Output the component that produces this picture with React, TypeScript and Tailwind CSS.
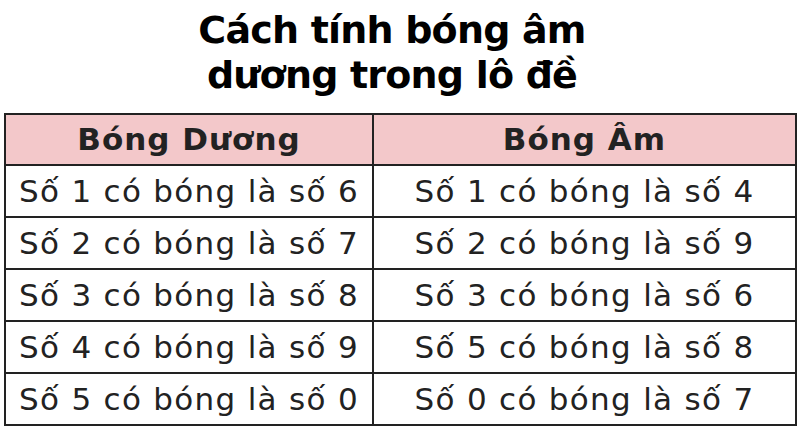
import React from 'react';

const ROWS: [string, string][] = [
  ['Số 1 có bóng là số 6', 'Số 1 có bóng là số 4'],
  ['Số 2 có bóng là số 7', 'Số 2 có bóng là số 9'],
  ['Số 3 có bóng là số 8', 'Số 3 có bóng là số 6'],
  ['Số 4 có bóng là số 9', 'Số 5 có bóng là số 8'],
  ['Số 5 có bóng là số 0', 'Số 0 có bóng là số 7'],
];

export default function App() {
  return (
    <div className="w-[800px] h-[431px] bg-white overflow-hidden font-['DejaVu_Sans',sans-serif]">
      {/* Title */}
      <h1 className="pt-[8px] pr-[16px] text-center font-bold text-[38px] leading-[45px] tracking-[-0.8px] text-black">
        Cách tính bóng âm
        <br />
        dương trong lô đề
      </h1>

      {/* Table */}
      <table className="mt-[15px] ml-[4px] w-[793px] border-collapse border-2 border-[#222] text-[#222]">
        <thead>
          <tr className="h-[51px] bg-[#f3c8ca]">
            <th className="w-[368px] border-2 border-[#222] text-[31px] font-bold tracking-[1px]">
              Bóng Dương
            </th>
            <th className="border-2 border-[#222] text-[31px] font-bold tracking-[1px]">
              Bóng Âm
            </th>
          </tr>
        </thead>
        <tbody>
          {ROWS.map(([left, right], i) => (
            <tr key={i} className="h-[52px]">
              <td className="border-2 border-[#222] text-center text-[31px] tracking-[1.3px] p-0">
                {left}
              </td>
              <td className="border-2 border-[#222] text-center text-[31px] tracking-[1.3px] p-0">
                {right}
              </td>
            </tr>
          ))}
        </tbody>
      </table>
    </div>
  );
}
